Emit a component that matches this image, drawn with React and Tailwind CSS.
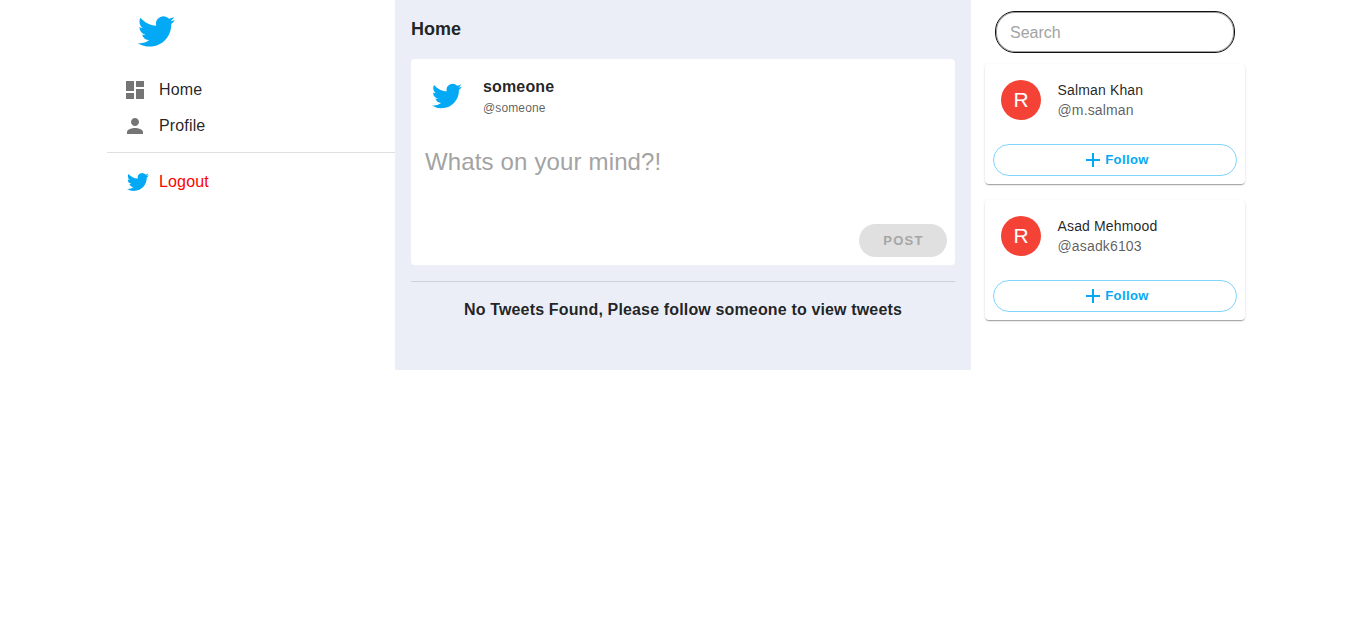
const people = [
  { name: 'Salman Khan', handle: '@m.salman' },
  { name: 'Asad Mehmood', handle: '@asadk6103' },
];

function Bird({ className }) {
  return (
    <svg viewBox="0 0 24 24" className={`fill-[#03a9f4] ${className}`} aria-hidden="true">
      <path d="M23.953 4.57a10 10 0 01-2.825.775 4.958 4.958 0 002.163-2.723c-.951.555-2.005.959-3.127 1.184a4.92 4.92 0 00-8.384 4.482C7.69 8.095 4.067 6.13 1.64 3.162a4.822 4.822 0 00-.666 2.475c0 1.71.87 3.213 2.188 4.096a4.904 4.904 0 01-2.228-.616v.06a4.923 4.923 0 003.946 4.827 4.996 4.996 0 01-2.212.085 4.936 4.936 0 004.604 3.417 9.867 9.867 0 01-6.102 2.105c-.39 0-.779-.023-1.17-.067a13.995 13.995 0 007.557 2.209c9.053 0 13.998-7.496 13.998-13.985 0-.21 0-.42-.015-.63A9.935 9.935 0 0024 4.59z" />
    </svg>
  );
}

function Icon({ d, className }) {
  return (
    <svg viewBox="0 0 24 24" className={`fill-current ${className}`} aria-hidden="true">
      <path d={d} />
    </svg>
  );
}

function NavItem({ icon, label, className = '' }) {
  return (
    <li className={`flex h-9 items-center pl-4 ${className}`}>
      <span className="flex w-9 shrink-0 text-[#757575]">{icon}</span>
      <span>{label}</span>
    </li>
  );
}

function Sidebar() {
  return (
    <nav className="w-72">
      <div className="pt-[13px] pl-[30.5px]">
        <Bird className="size-[37px]" />
      </div>
      <ul className="mt-[22px]">
        <NavItem icon={<Icon className="size-6" d="M3 13h8V3H3v10zm0 8h8v-6H3v6zm10 0h8V11h-8v10zm0-18v6h8V3h-8z" />} label="Home" />
        <NavItem icon={<Icon className="size-6" d="M12 12c2.21 0 4-1.79 4-4s-1.79-4-4-4-4 1.79-4 4 1.79 4 4 4zm0 2c-2.67 0-8 1.34-8 4v2h16v-2c0-2.66-5.33-4-8-4z" />} label="Profile" />
      </ul>
      <hr className="mt-2 border-0 border-t border-black/12" />
      <ul className="mt-[11px]">
        <NavItem icon={<Bird className="ml-1 size-[22px]" />} label="Logout" className="text-[#ff0000]" />
      </ul>
    </nav>
  );
}

function Feed() {
  return (
    <main className="h-[370px] w-[576px] bg-[#ebeef7] px-4">
      <h1 className="pt-4 text-lg leading-[27px] font-bold tracking-normal">Home</h1>
      <section className="mt-4 flex h-[206px] flex-col rounded bg-white">
        <div className="flex pt-4 pl-[21px]">
          <Bird className="mt-[5.5px] size-[30px]" />
          <div className="ml-[21px]">
            <p className="leading-6 font-bold">someone</p>
            <p className="text-xs leading-[18px] tracking-[0.01071em] text-black/65">@someone</p>
          </div>
        </div>
        <textarea
          className="mt-[29px] ml-3.5 h-8 resize-none text-2xl leading-8 tracking-[0.15px] outline-none placeholder:text-[#a3a3a3]"
          placeholder="Whats on your mind?!"
        />
        <button className="mt-auto mr-2 mb-2 h-[33px] w-[88px] self-end rounded-full bg-[#e0e0e0] pl-px text-[13px] font-bold tracking-[1.3px] text-[#a6a6a6]">
          POST
        </button>
      </section>
      <hr className="mt-4 border-0 border-t border-black/12" />
      <p className="mt-4 text-center leading-6 font-bold">No Tweets Found, Please follow someone to view tweets</p>
    </main>
  );
}

function PersonCard({ name, handle }) {
  return (
    <article className="flex h-[120px] flex-col rounded bg-white px-2 shadow-[0_2px_1px_-1px_rgba(0,0,0,0.2),0_1px_1px_0_rgba(0,0,0,0.14),0_1px_3px_0_rgba(0,0,0,0.12)]">
      <div className="flex pt-4 pl-2">
        <div className="flex size-10 items-center justify-center rounded-full bg-[#f44336] text-[21px] tracking-normal text-white">R</div>
        <div className="ml-[16.5px] text-sm leading-5 tracking-[0.01071em]">
          <p>{name}</p>
          <p className="text-black/65">{handle}</p>
        </div>
      </div>
      <button className="mt-6 flex h-8 items-center justify-center rounded-full border border-[#81d4fa] text-[13px] font-bold tracking-[0.4px] text-[#03a9f4]">
        <Icon className="size-6" d="M19 13h-6v6h-2v-6H5v-2h6V5h2v6h6v2z" />
        Follow
      </button>
    </article>
  );
}

function Aside() {
  return (
    <aside className="w-72 pt-[11px] pr-3.5 pl-3.5">
      <input
        className="mx-2.5 h-[42px] w-60 rounded-[20px] border border-[#101010] px-3.5 pt-0.5 tracking-normal shadow-[inset_0_0_0_1px_#a0a0a0] outline-none placeholder:text-[#a3a3a3]"
        placeholder="Search"
      />
      <div className="mt-[11px] flex flex-col gap-4">
        {people.map((p) => (
          <PersonCard key={p.handle} {...p} />
        ))}
      </div>
    </aside>
  );
}

export default function App() {
  return (
    <div className="flex min-h-screen items-start bg-white pl-[107px] font-['Liberation_Sans',Arial,sans-serif] tracking-[0.00938em] text-black/87">
      <Sidebar />
      <Feed />
      <Aside />
    </div>
  );
}
